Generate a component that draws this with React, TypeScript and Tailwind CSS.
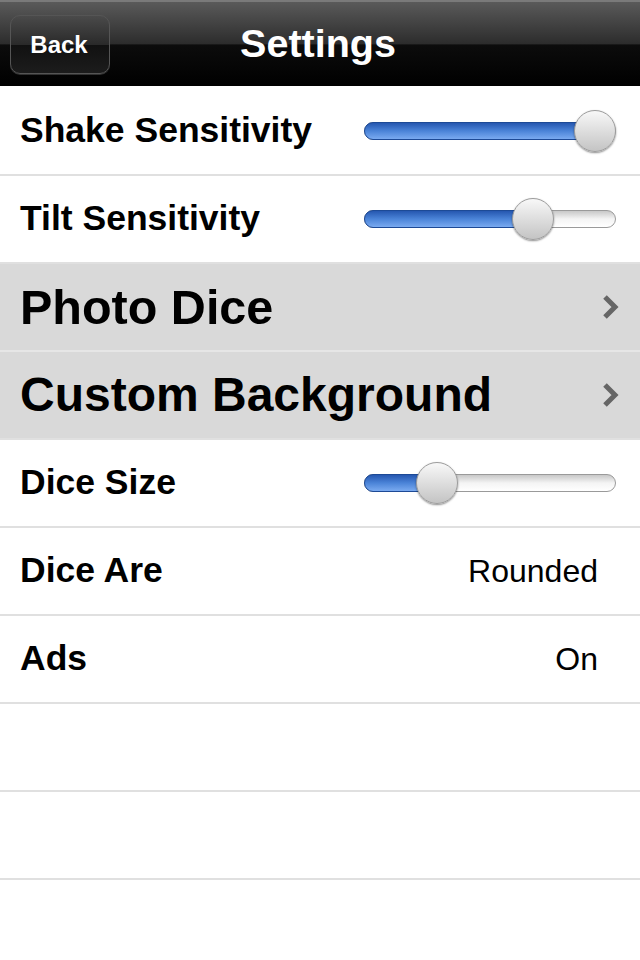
import React from 'react';

const font = { fontFamily: '"Liberation Sans", Arial, Helvetica, sans-serif' };

// track runs 252px, thumb is 42px, so thumb left goes 0..210
const Slider: React.FC<{ pos: number }> = ({ pos }) => {
  const left = Math.round(pos * 210);
  return (
    <div className="relative w-[252px] h-[18px]">
      <div className="absolute inset-0 rounded-full border border-[#9a9a9a] bg-gradient-to-b from-[#c8c8c8] via-[#f4f4f4] to-[#ffffff]" />
      <div
        className="absolute left-0 top-0 h-[18px] rounded-full border border-[#1d4a96] bg-gradient-to-b from-[#2657b0] via-[#4b84d8] to-[#7aaaf0]"
        style={{ width: left + 30 }}
      />
      <div
        className="absolute top-[-12px] w-[42px] h-[42px] rounded-full border border-[#9c9c9c] bg-gradient-to-b from-[#f8f8f8] to-[#c4c4c4] shadow-[0_1px_2px_rgba(0,0,0,0.45)]"
        style={{ left }}
      />
    </div>
  );
};

const Chevron = () => (
  <svg width="18" height="26" viewBox="0 0 18 26">
    <path d="M3 3 L13 13 L3 23" fill="none" stroke="#666" strokeWidth="5" strokeLinejoin="miter" />
  </svg>
);

export default function App() {
  return (
    <div className="w-[640px] h-[960px] bg-white overflow-hidden" style={font}>
      {/* nav bar */}
      <div className="relative h-[86px] mb-[2px] flex items-center justify-center border-t-2 border-[#7a7a7a] bg-[linear-gradient(to_bottom,#5a5a5a_0%,#2c2c2c_50%,#0c0c0c_51%,#000_100%)]">
        <button className="absolute left-[10px] top-[13px] w-[100px] h-[59px] rounded-[10px] border border-[#555] bg-[linear-gradient(to_bottom,#4a4a4a_0%,#2a2a2a_50%,#111_51%,#1c1c1c_100%)] shadow-[0_1px_0_rgba(255,255,255,0.18)] text-white font-bold text-[24px] pr-[2px]">
          Back
        </button>
        <h1 className="text-white font-bold text-[39.5px] -ml-[4px]">Settings</h1>
      </div>

      <div className="flex items-center justify-between h-[88px] border-b-2 border-[#e0e0e0] pl-[20px] pr-[24px]">
        <span className="font-bold text-[35.5px] text-black">Shake Sensitivity</span>
        <Slider pos={1} />
      </div>
      <div className="flex items-center justify-between h-[88px] border-b-2 border-[#e0e0e0] pl-[20px] pr-[24px]">
        <span className="font-bold text-[35.5px] text-black">Tilt Sensitivity</span>
        <Slider pos={0.705} />
      </div>

      <div className="flex items-center justify-between h-[88px] bg-[#d9d9d9] border-b-2 border-[#e6e6e6] pl-[20px] pr-[20px]">
        <span className="font-bold text-[48.5px] text-black">Photo Dice</span>
        <Chevron />
      </div>
      <div className="flex items-center justify-between h-[88px] bg-[#d9d9d9] border-b-2 border-[#e0e0e0] pl-[20px] pr-[20px]">
        <span className="font-bold text-[48px] text-black">Custom Background</span>
        <Chevron />
      </div>

      <div className="flex items-center justify-between h-[88px] border-b-2 border-[#e0e0e0] pl-[20px] pr-[24px]">
        <span className="font-bold text-[35.5px] text-black">Dice Size</span>
        <Slider pos={0.248} />
      </div>
      <div className="flex items-center justify-between h-[88px] border-b-2 border-[#e0e0e0] pl-[20px] pr-[42px]">
        <span className="font-bold text-[35.5px] text-black">Dice Are</span>
        <span className="text-[32px] text-black">Rounded</span>
      </div>
      <div className="flex items-center justify-between h-[88px] border-b-2 border-[#e0e0e0] pl-[20px] pr-[42px]">
        <span className="font-bold text-[35.5px] text-black">Ads</span>
        <span className="text-[32px] text-black">On</span>
      </div>
      <div className="h-[88px] border-b-2 border-[#e0e0e0]" />
      <div className="h-[88px] border-b-2 border-[#e0e0e0]" />
    </div>
  );
}
